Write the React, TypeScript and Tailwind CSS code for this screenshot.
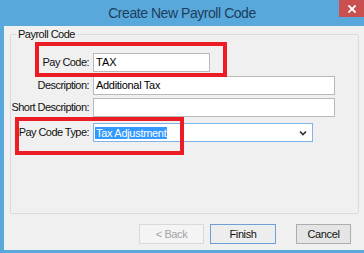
const inputBase =
  "h-[19px] bg-white border border-[#b9b9b9] pl-[2px] text-[11px] leading-[17px] text-black";

function Row({ label, children, className = "" }: { label: string; children: React.ReactNode; className?: string }) {
  return (
    <div className={`flex items-center gap-[4px] ${className}`}>
      <span className="w-[78px] text-right text-[11px] leading-[13px] tracking-[-0.55px] text-[#111]">{label}</span>
      {children}
    </div>
  );
}

export default function App() {
  return (
    <div className="w-[364px] h-[253px] bg-[#58a8dc] flex flex-col overflow-hidden font-['Liberation_Sans',Arial,sans-serif]">
      {/* title bar */}
      <div className="relative h-[26px] flex items-center justify-center shrink-0">
        <span className="text-[14px] tracking-[-0.45px] text-[#1d3e5c] pt-[1px]">Create New Payroll Code</span>
        <div className="absolute right-0 top-0 w-[25px] h-[17px] bg-[#c9504e] flex items-center justify-center">
          <svg width="8" height="8" viewBox="0 0 8 8">
            <path d="M1 1L7 7M7 1L1 7" stroke="white" strokeWidth="1.8" strokeLinecap="square" />
          </svg>
        </div>
      </div>

      {/* body */}
      <div className="relative flex-1 ml-[4px] mb-[3px] bg-[#f0f0f0] flex flex-col">
        <fieldset className="ml-[6px] mr-[5px] mt-[2px] h-[186px] border border-[#d6dbe0] rounded-[2px]">
          <legend className="ml-[5px] px-[2px] text-[11px] leading-[13px] tracking-[-0.5px] text-[#111]">Payroll Code</legend>
          <div className="pt-[12px] flex flex-col">
            <Row label="Pay Code:">
              <div className={`${inputBase} w-[117px]`}>TAX</div>
            </Row>
            <Row label="Description:" className="mt-[4px]">
              <div className={`${inputBase} w-[242px] tracking-[-0.3px]`}>Additional Tax</div>
            </Row>
            <Row label="Short Description:" className="mt-[3px]">
              <div className={`${inputBase} w-[242px]`}></div>
            </Row>
            <Row label="Pay Code Type:" className="mt-[6px]">
              <div className="h-[19px] w-[220px] bg-white border border-[#7eb4ea] flex items-center pl-[1px] pr-[5px]">
                <span className="bg-[#3399ff] text-white text-[11px] leading-[12px] px-[1px] tracking-[-0.3px]">Tax Adjustment</span>
                <svg className="ml-auto" width="8" height="6" viewBox="0 0 8 6">
                  <path d="M1 1.5L4 4.5L7 1.5" stroke="#333" strokeWidth="1.7" fill="none" />
                </svg>
              </div>
            </Row>
          </div>
        </fieldset>

        {/* buttons */}
        <div className="flex mt-[10px] ml-[135px] text-[11px] tracking-[-0.4px]">
          <div className="w-[65px] h-[20px] border border-[#d9d9d9] bg-[#f4f4f4] text-[#a3a3a3] flex items-center justify-center">&lt; Back</div>
          <div className="ml-[6px] w-[66px] h-[20px] border border-[#6f9fd6] bg-[#ededed] text-[#111] flex items-center justify-center">Finish</div>
          <div className="ml-[20px] w-[55px] h-[20px] border border-[#adadad] bg-[#e5e5e5] text-[#111] flex items-center justify-center">Cancel</div>
        </div>

        {/* annotation boxes */}
        <div className="absolute left-[31px] top-[16px] w-[192px] h-[35px] border-[4px] border-[#ec1c24]" />
        <div className="absolute left-[11px] top-[91px] w-[169px] h-[38px] border-[4px] border-[#ec1c24]" />
      </div>
    </div>
  );
}
